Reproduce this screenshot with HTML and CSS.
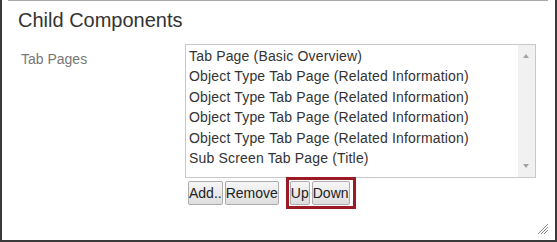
FILE: index.html
```html
<!DOCTYPE html>
<html>
<head>
<meta charset="utf-8">
<link rel="stylesheet" href="styles.css">
</head>
<body>
<div class="window">
  <div class="topline"></div>
  <h2 class="title">Child Components</h2>
  <div class="row">
    <label class="label">Tab Pages</label>
    <div class="field">
      <div class="listbox">
        <div class="options">
          <div class="opt">Tab Page (Basic Overview)</div>
          <div class="opt">Object Type Tab Page (Related Information)</div>
          <div class="opt">Object Type Tab Page (Related Information)</div>
          <div class="opt">Object Type Tab Page (Related Information)</div>
          <div class="opt">Object Type Tab Page (Related Information)</div>
          <div class="opt">Sub Screen Tab Page (Title)</div>
        </div>
        <div class="scrollbar">
          <span class="arrow up"></span>
          <span class="arrow down"></span>
        </div>
      </div>
      <div class="buttons">
        <button class="btn">Add..</button>
        <button class="btn">Remove</button>
        <div class="highlight">
          <button class="btn">Up</button>
          <button class="btn">Down</button>
        </div>
      </div>
    </div>
  </div>
  <svg class="grip" width="12" height="12" viewBox="0 0 12 12">
    <line x1="1" y1="11" x2="11" y2="1" stroke="#8a8a8a" stroke-width="1"/>
    <line x1="4" y1="11" x2="11" y2="4" stroke="#8a8a8a" stroke-width="1"/>
    <line x1="7" y1="11" x2="11" y2="7" stroke="#8a8a8a" stroke-width="1"/>
  </svg>
</div>
</body>
</html>
```
FILE: styles.css
```css
html, body {
  margin: 0;
  padding: 0;
  background: #ffffff;
}
body {
  font-family: "Liberation Sans", Arial, sans-serif;
  color: #333333;
}
.window {
  position: relative;
  width: 557px;
  height: 242px;
  box-sizing: border-box;
  border-left: 2px solid #3a3a3a;
  border-right: 2px solid #3a3a3a;
  border-bottom: 2px solid #3a3a3a;
}
.topline {
  margin: 0 7px 0 6px;
  border-top: 1px solid #a8a8a8;
}
.title {
  margin: 7px 0 0 16px;
  font-size: 20px;
  line-height: 24px;
  font-weight: normal;
  color: #333333;
}
.row {
  display: flex;
  margin-top: 12px;
}
.label {
  width: 183px;
  padding-left: 19px;
  padding-top: 5px;
  box-sizing: border-box;
  font-size: 14px;
  line-height: 20px;
  color: #777777;
}
.field {
  display: flex;
  flex-direction: column;
}
.listbox {
  display: flex;
  width: 351px;
  height: 134px;
  box-sizing: border-box;
  border: 1px solid #c8c8c8;
  background: #fff;
}
.options {
  flex: 1;
  padding-top: 1px;
}
.opt {
  font-size: 14px;
  line-height: 20.4px;
  letter-spacing: 0.17px;
  padding-left: 3px;
  color: #333333;
  white-space: nowrap;
}
.scrollbar {
  position: relative;
  width: 17px;
  background: #f1f1f1;
}
.arrow {
  position: absolute;
  left: 5px;
  width: 0;
  height: 0;
  border-left: 3.5px solid transparent;
  border-right: 3.5px solid transparent;
}
.arrow.up {
  top: 9px;
  border-bottom: 4px solid #a3a3a3;
}
.arrow.down {
  bottom: 9px;
  border-top: 4px solid #a3a3a3;
}
.buttons {
  display: flex;
  align-items: center;
  margin-top: -1px;
  padding-left: 3px;
}
.btn {
  font-family: "Liberation Sans", Arial, sans-serif;
  font-size: 14px;
  line-height: 18px;
  height: 24px;
  padding: 1px 0;
  margin: 0 2px 0 0;
  color: #222;
  border: 1px solid #adadad;
  border-radius: 2px;
  background: linear-gradient(#f6f6f6, #dedede);
}
.highlight {
  display: flex;
  margin-left: 5px;
  padding: 1px 3px 1px 1px;
  border: 3px solid #9b1b25;
}
.highlight .btn:last-child {
  margin-right: 0;
}
.grip {
  position: absolute;
  right: 6px;
  bottom: 5px;
}
```
